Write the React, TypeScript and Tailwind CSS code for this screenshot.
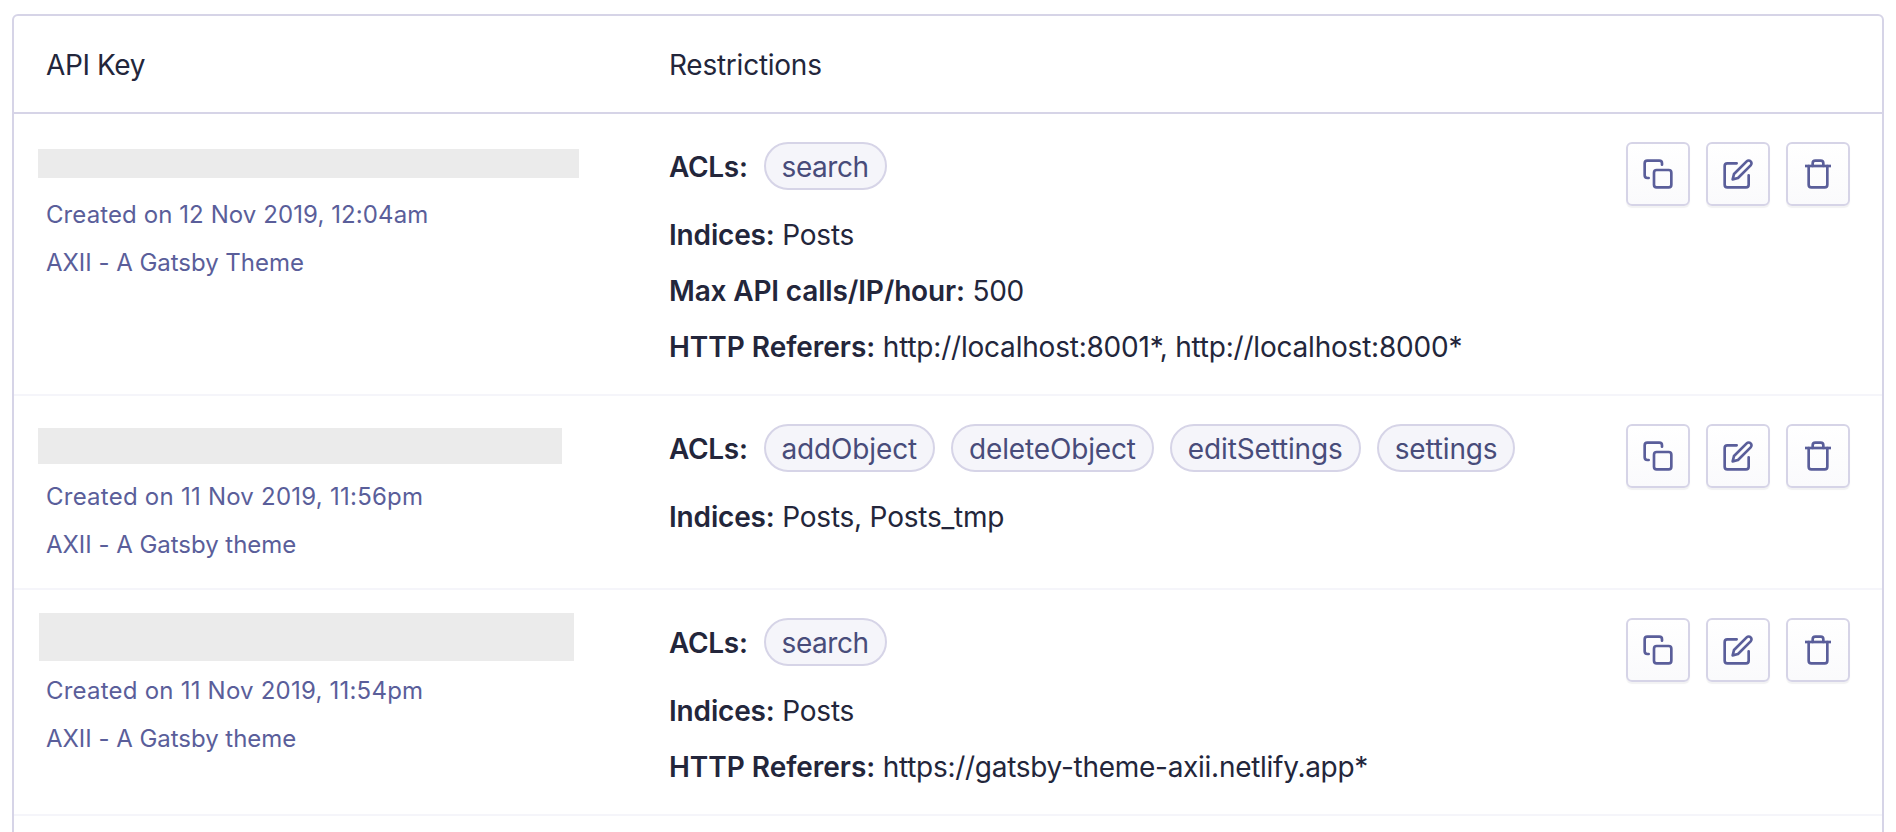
import type { ReactNode } from "react";

type ApiKey = {
  bar: string;
  created: string;
  createdTracking: string;
  name: string;
  acls: string[];
  details: { label: string; value: string; labelTracking: string; valueTracking: string }[];
  height: string;
};

const keys: ApiKey[] = [
  {
    bar: "mt-[35px] ml-[24px] h-[29px] w-[541px] mb-[13px]",
    created: "Created on 12 Nov 2019, 12:04am",
    createdTracking: "tracking-[0.09px]",
    name: "AXII - A Gatsby Theme",
    acls: ["search"],
    details: [
      { label: "Indices:", value: "Posts", labelTracking: "tracking-[-0.16px]", valueTracking: "tracking-[-0.22px]" },
      {
        label: "Max API calls/IP/hour:",
        value: "500",
        labelTracking: "tracking-[-0.16px]",
        valueTracking: "tracking-[-0.22px]",
      },
      {
        label: "HTTP Referers:",
        value: "http://localhost:8001*, http://localhost:8000*",
        labelTracking: "tracking-[-0.04px]",
        valueTracking: "tracking-[-0.21px]",
      },
    ],
    height: "h-[282px]",
  },
  {
    bar: "mt-[32px] ml-[24px] h-[36px] w-[524px] mb-[9px]",
    created: "Created on 11 Nov 2019, 11:56pm",
    createdTracking: "tracking-[0.24px]",
    name: "AXII - A Gatsby theme",
    acls: ["addObject", "deleteObject", "editSettings", "settings"],
    details: [
      {
        label: "Indices:",
        value: "Posts, Posts_tmp",
        labelTracking: "tracking-[-0.16px]",
        valueTracking: "tracking-[-0.22px]",
      },
    ],
    height: "h-[194px]",
  },
  {
    bar: "mt-[23px] ml-[25px] h-[48px] w-[535px] mb-[6px]",
    created: "Created on 11 Nov 2019, 11:54pm",
    createdTracking: "tracking-[0.22px]",
    name: "AXII - A Gatsby theme",
    acls: ["search"],
    details: [
      { label: "Indices:", value: "Posts", labelTracking: "tracking-[-0.16px]", valueTracking: "tracking-[-0.22px]" },
      {
        label: "HTTP Referers:",
        value: "https://gatsby-theme-axii.netlify.app*",
        labelTracking: "tracking-[-0.04px]",
        valueTracking: "tracking-[-0.28px]",
      },
    ],
    height: "h-[226px]",
  },
];

function IconButton({ label, children }: { label: string; children: ReactNode }) {
  return (
    <button
      aria-label={label}
      className="flex size-16 items-center justify-center rounded-md border-2 border-[#d6d4e7] bg-linear-to-b from-white to-[#fafafc] text-[#5a5e9a] shadow-[0_2px_1px_rgba(35,38,59,0.06)]"
    >
      <svg
        className="size-8"
        viewBox="0 0 24 24"
        fill="none"
        stroke="currentColor"
        strokeWidth="2"
        strokeLinecap="round"
        strokeLinejoin="round"
      >
        {children}
      </svg>
    </button>
  );
}

function Actions() {
  return (
    <div className="mt-[28px] mr-8 ml-auto flex gap-4">
      <IconButton label="Copy">
        <rect x="9" y="9" width="13" height="13" rx="2" />
        <path d="M5 15H4a2 2 0 0 1-2-2V4a2 2 0 0 1 2-2h9a2 2 0 0 1 2 2v1" />
      </IconButton>
      <IconButton label="Edit">
        <path d="M11 4H4a2 2 0 0 0-2 2v14a2 2 0 0 0 2 2h14a2 2 0 0 0 2-2v-7" />
        <path d="M18.5 2.5a2.121 2.121 0 0 1 3 3L12 15l-4 1 1-4z" />
      </IconButton>
      <IconButton label="Delete">
        <path d="M2.25 6h19.5" strokeLinecap="butt" />
        <path d="M19 6v14a2 2 0 0 1-2 2H7a2 2 0 0 1-2-2V6m3 0V4a2 2 0 0 1 2-2h4a2 2 0 0 1 2 2v2" />
      </IconButton>
    </div>
  );
}

function Row({ item }: { item: ApiKey }) {
  return (
    <div className={`flex items-start border-b-2 border-[#f5f5fa] ${item.height}`}>
      <div className="w-[655px] shrink-0">
        <div className={`bg-[#ebebeb] ${item.bar}`} />
        <div className="pl-8 text-2xl leading-[48px] text-[#5a5e9a]">
          <p className={item.createdTracking}>{item.created}</p>
          <p className="tracking-[-0.03px]">{item.name}</p>
        </div>
      </div>
      <div className="mt-[28px]">
        <div className="mb-[17px] flex h-12 items-center gap-4">
          <span className="pt-0.5 font-semibold tracking-[-0.3px]">ACLs:</span>
          {item.acls.map((acl) => (
            <span
              key={acl}
              className={`flex h-12 items-center rounded-full border-2 border-[#d6d4e7] bg-[#f5f5fa] px-4 pt-0.5 text-[#484c7a] ${
                acl === "search" ? "tracking-[-0.45px]" : "tracking-[-0.15px]"
              }`}
            >
              {acl}
            </span>
          ))}
        </div>
        {item.details.map((detail) => (
          <p key={detail.label} className={`leading-[56px] ${detail.valueTracking}`}>
            <span className={`font-semibold ${detail.labelTracking}`}>{detail.label}</span> {detail.value}
          </p>
        ))}
      </div>
      <Actions />
    </div>
  );
}

export default function App() {
  return (
    <div className="h-[832px] overflow-hidden bg-white px-3 pt-[14px] font-['Inter',sans-serif] text-[28px] text-[#23263b]">
      <div className="h-[900px] rounded-md border-2 border-[#d6d4e7] bg-white">
        <div className="flex h-[98px] items-center border-b-2 border-[#d6d4e7] pt-0.5 pl-8">
          <div className="w-[623px] tracking-[-0.4px]">API Key</div>
          <div className="tracking-[-0.25px]">Restrictions</div>
        </div>
        {keys.map((item) => (
          <Row key={item.created} item={item} />
        ))}
      </div>
    </div>
  );
}
